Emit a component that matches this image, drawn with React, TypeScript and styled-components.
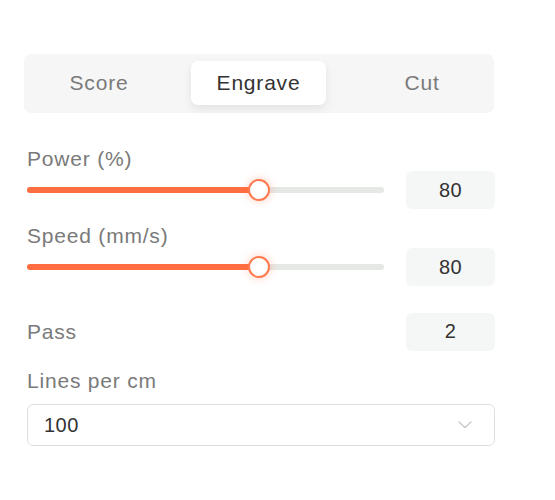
import { useState } from "react";
import styled, { createGlobalStyle } from "styled-components";

const GlobalStyle = createGlobalStyle`
  html, body {
    margin: 0;
    padding: 0;
    background: #ffffff;
  }
  body {
    font-family: "Liberation Sans", Arial, sans-serif;
  }
`;

const TABS = ["Score", "Engrave", "Cut"];

export default function App() {
  const [tab, setTab] = useState("Engrave");
  const [power] = useState(80);
  const [speed] = useState(80);

  return (
    <>
      <GlobalStyle />
      <Panel>
        <TabBar>
          {TABS.map((t) => (
            <Tab key={t} $active={t === tab} onClick={() => setTab(t)}>
              {t}
            </Tab>
          ))}
        </TabBar>

        <Label $top={34}>Power (%)</Label>
        <SliderRow>
          <Slider value={power} />
          <ValueBox>{power}</ValueBox>
        </SliderRow>

        <Label $top={15}>Speed (mm/s)</Label>
        <SliderRow>
          <Slider value={speed} />
          <ValueBox>{speed}</ValueBox>
        </SliderRow>

        <PassRow>
          <Label $top={0}>Pass</Label>
          <ValueBox>2</ValueBox>
        </PassRow>

        <Label $top={19}>Lines per cm</Label>
        <Select>
          <span>100</span>
          <svg width="14" height="8" viewBox="0 0 14 8" fill="none">
            <path d="M1 1l6 5.5L13 1" stroke="#c9c9c9" strokeWidth="1.4" strokeLinecap="round" strokeLinejoin="round" />
          </svg>
        </Select>
      </Panel>
    </>
  );
}

function Slider({ value }: { value: number }) {
  const pct = (value / 123) * 100;
  return (
    <Track>
      <Fill style={{ width: `${pct}%` }} />
      <Thumb style={{ left: `${pct}%` }} />
    </Track>
  );
}

const Panel = styled.div`
  width: 468px;
  padding: 54px 0 0 27px;
  display: flex;
  flex-direction: column;
`;

const TabBar = styled.div`
  margin-left: -3px;
  width: 470px;
  height: 59px;
  box-sizing: border-box;
  padding: 7px 0 8px 7px;
  background: #f5f6f5;
  border-radius: 7px;
  display: grid;
  grid-template-columns: 136px 135px 1fr;
  column-gap: 24px;
`;

const Tab = styled.div<{ $active: boolean }>`
  display: flex;
  align-items: center;
  justify-content: center;
  font-size: 21px;
  letter-spacing: 0.8px;
  color: ${(p) => (p.$active ? "#333333" : "#7a7a7a")};
  background: ${(p) => (p.$active ? "#ffffff" : "transparent")};
  border-radius: 7px;
  box-shadow: ${(p) => (p.$active ? "0 4px 10px rgba(0, 0, 0, 0.08)" : "none")};
  cursor: pointer;
`;

const Label = styled.div<{ $top: number }>`
  margin-top: ${(p) => p.$top}px;
  height: 24px;
  line-height: 24px;
  font-size: 21px;
  letter-spacing: 0.8px;
  color: #7a7a7a;
`;

const SliderRow = styled.div`
  display: flex;
  align-items: center;
  justify-content: space-between;
  height: 38px;
`;

const PassRow = styled.div`
  margin-top: 27px;
  display: flex;
  align-items: center;
  justify-content: space-between;
  height: 37px;
`;

const Track = styled.div`
  position: relative;
  width: 357px;
  height: 6px;
  border-radius: 3px;
  background: #e6e8e6;
`;

const Fill = styled.div`
  height: 100%;
  border-radius: 3px;
  background: #ff6e40;
`;

const Thumb = styled.div`
  position: absolute;
  top: 50%;
  width: 22px;
  height: 22px;
  box-sizing: border-box;
  transform: translate(-50%, -50%);
  border-radius: 50%;
  border: 2.5px solid #ff7a4f;
  background: #ffffff;
  box-shadow: 0 0 8px rgba(255, 110, 64, 0.35);
`;

const ValueBox = styled.div`
  width: 89px;
  height: 38px;
  border-radius: 6px;
  background: #f5f6f6;
  display: flex;
  align-items: center;
  justify-content: center;
  font-size: 20px;
  letter-spacing: 0.5px;
  color: #333333;
`;

const Select = styled.div`
  margin-top: 11px;
  height: 42px;
  box-sizing: border-box;
  border: 1px solid #dedede;
  border-radius: 6px;
  padding: 0 22px 0 16px;
  display: flex;
  align-items: center;
  justify-content: space-between;
  font-size: 20px;
  letter-spacing: 0.5px;
  color: #333333;
`;
